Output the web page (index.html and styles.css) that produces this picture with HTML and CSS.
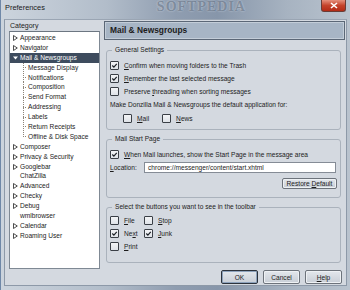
FILE: index.html
```html
<!DOCTYPE html>
<html lang="en">
<head>
    <meta charset="UTF-8">
    <title>Preferences</title>
    <link rel="stylesheet" href="styles.css">
</head>
<body>
    <div class="window">
        <div class="titlebar">
            <span class="title">Preferences</span>
            <span class="watermark">SOFTPEDIA</span>
            <span class="close">
                <svg width="8" height="7" viewBox="0 0 8 7"><path d="M1 1 L7 6 M7 1 L1 6" stroke="#fff" stroke-width="1.6"/></svg>
            </span>
        </div>

        <div class="client">
            <div class="main">
                <!-- category tree -->
                <div class="sidebar">
                    <div class="cat-label">Category</div>
                    <ul class="tree">
                        <li class="row"><svg class="twisty" viewBox="0 0 5 6"><path d="M0.5 0.5 L4.3 3 L0.5 5.5 Z"/></svg>Appearance</li>
                        <li class="row"><svg class="twisty" viewBox="0 0 5 6"><path d="M0.5 0.5 L4.3 3 L0.5 5.5 Z"/></svg>Navigator</li>
                        <li class="row selected"><svg class="twisty open" viewBox="0 0 5 6"><path d="M0 1.5 L5 1.5 L2.5 4.5 Z"/></svg>Mail &amp; Newsgroups</li>
                        <li>
                            <ul class="sub">
                                <li class="row">Message Display</li>
                                <li class="row">Notifications</li>
                                <li class="row">Composition</li>
                                <li class="row">Send Format</li>
                                <li class="row">Addressing</li>
                                <li class="row">Labels</li>
                                <li class="row">Return Receipts</li>
                                <li class="row">Offline &amp; Disk Space</li>
                            </ul>
                        </li>
                        <li class="row"><svg class="twisty" viewBox="0 0 5 6"><path d="M0.5 0.5 L4.3 3 L0.5 5.5 Z"/></svg>Composer</li>
                        <li class="row"><svg class="twisty" viewBox="0 0 5 6"><path d="M0.5 0.5 L4.3 3 L0.5 5.5 Z"/></svg>Privacy &amp; Security</li>
                        <li class="row"><svg class="twisty" viewBox="0 0 5 6"><path d="M0.5 0.5 L4.3 3 L0.5 5.5 Z"/></svg>Googlebar</li>
                        <li class="row leaf">ChatZilla</li>
                        <li class="row"><svg class="twisty" viewBox="0 0 5 6"><path d="M0.5 0.5 L4.3 3 L0.5 5.5 Z"/></svg>Advanced</li>
                        <li class="row"><svg class="twisty" viewBox="0 0 5 6"><path d="M0.5 0.5 L4.3 3 L0.5 5.5 Z"/></svg>Checky</li>
                        <li class="row"><svg class="twisty" viewBox="0 0 5 6"><path d="M0.5 0.5 L4.3 3 L0.5 5.5 Z"/></svg>Debug</li>
                        <li class="row leaf">wmlbrowser</li>
                        <li class="row"><svg class="twisty" viewBox="0 0 5 6"><path d="M0.5 0.5 L4.3 3 L0.5 5.5 Z"/></svg>Calendar</li>
                        <li class="row"><svg class="twisty" viewBox="0 0 5 6"><path d="M0.5 0.5 L4.3 3 L0.5 5.5 Z"/></svg>Roaming User</li>
                    </ul>
                </div>

                <!-- settings panel -->
                <div class="panel">
                    <div class="panel-head">Mail &amp; Newsgroups</div>

                    <fieldset class="group general">
                        <legend>General Settings</legend>
                        <div class="check-row"><span class="cb on"><svg viewBox="0 0 8 8"><path d="M1.5 4 L3.3 5.8 L6.6 2.2"/></svg></span><span><u>C</u>onfirm when moving folders to the Trash</span></div>
                        <div class="check-row"><span class="cb on"><svg viewBox="0 0 8 8"><path d="M1.5 4 L3.3 5.8 L6.6 2.2"/></svg></span><span><u>R</u>emember the last selected message</span></div>
                        <div class="check-row"><span class="cb"></span><span>Preserve <u>t</u>hreading when sorting messages</span></div>
                        <div class="text-row">Make Donzilla Mail &amp; Newsgroups the default application for:</div>
                        <div class="check-row indent">
                            <span class="cb"></span><span class="opt"><u>M</u>ail</span>
                            <span class="cb"></span><span><u>N</u>ews</span>
                        </div>
                    </fieldset>

                    <fieldset class="group start">
                        <legend>Mail Start Page</legend>
                        <div class="check-row"><span class="cb on"><svg viewBox="0 0 8 8"><path d="M1.5 4 L3.3 5.8 L6.6 2.2"/></svg></span><span><u>W</u>hen Mail launches, show the Start Page in the message area</span></div>
                        <div class="location">
                            <span class="loc-label"><u>L</u>ocation:</span>
                            <span class="field">chrome://messenger/content/start.xhtml</span>
                        </div>
                        <div class="restore-row">
                            <span class="btn small"><span>Restore <u>D</u>efault</span></span>
                        </div>
                    </fieldset>

                    <fieldset class="group toolbar">
                        <legend>Select the buttons you want to see in the toolbar</legend>
                        <div class="tb-grid">
                            <div class="check-row"><span class="cb"></span><span><u>F</u>ile</span></div>
                            <div class="check-row"><span class="cb"></span><span><u>S</u>top</span></div>
                            <div class="check-row"><span class="cb on"><svg viewBox="0 0 8 8"><path d="M1.5 4 L3.3 5.8 L6.6 2.2"/></svg></span><span>Ne<u>x</u>t</span></div>
                            <div class="check-row"><span class="cb on"><svg viewBox="0 0 8 8"><path d="M1.5 4 L3.3 5.8 L6.6 2.2"/></svg></span><span><u>J</u>unk</span></div>
                            <div class="check-row"><span class="cb"></span><span><u>P</u>rint</span></div>
                        </div>
                    </fieldset>
                </div>
            </div>

            <div class="footer">
                <span class="btn default">OK</span>
                <span class="btn">Cancel</span>
                <span class="btn"><span><u>H</u>elp</span></span>
            </div>
        </div>
    </div>
</body>
</html>
```

FILE: styles.css
```css
body {
    margin: 0;
    width: 350px;
    height: 290px;
    overflow: hidden;
    font-family: "Liberation Sans", Arial, sans-serif;
    font-size: 6.6px;
    color: #1c1c1c;
    background: #b4bfcc;
}

u {
    text-decoration: underline;
}

.window {
    height: 290px;
    display: flex;
    flex-direction: column;
    border-left: 1px solid #6f88a8;
    background: linear-gradient(to right, #ccd4dd 0%, #b2bdca 30%, #8f9db0 50%, #8796aa 62%, #a7b3c1 82%, #b9c3ce 100%);
}

/* title bar */
.titlebar {
    height: 19px;
    display: flex;
    align-items: flex-start;
}

.title {
    margin: 3px 0 0 4px;
    font-size: 7.4px;
    color: #1a1a1a;
}

.watermark {
    margin: 0 0 0 112px;
    font-family: "Liberation Serif", serif;
    font-weight: bold;
    font-size: 14px;
    line-height: 14px;
    letter-spacing: 1px;
    color: rgba(70, 84, 104, 0.5);
    text-shadow: 0 0 2px rgba(230, 236, 244, 0.7);
}

.close {
    margin-left: auto;
    margin-right: 4px;
    width: 23px;
    height: 11px;
    display: flex;
    align-items: center;
    justify-content: center;
    border: 1px solid #6a3c36;
    border-top: none;
    border-radius: 0 0 3px 3px;
    background: linear-gradient(#e5907c, #c4432b 50%, #b32b16);
}

/* client area */
.client {
    flex: 1;
    margin: 0 3px 4px 3px;
    padding: 1px 1px 0 0;
    background: #d4d9e0;
    border: 1px solid #8d99a8;
    border-top-color: #9aa5b3;
    display: flex;
    flex-direction: column;
}

.main {
    display: flex;
    gap: 4px;
}

.sidebar {
    width: 91px;
    padding-left: 4px;
}

.cat-label {
    height: 10px;
    line-height: 10px;
    padding-left: 1px;
    font-size: 7px;
}

.tree {
    list-style: none;
    margin: 0;
    padding: 1px 0 0;
    height: 235px;
    background: #fff;
    border: 1px solid #7f8994;
    border-top-color: #6c7681;
}

.tree .row {
    height: 9.9px;
    line-height: 9.9px;
    display: flex;
    align-items: center;
    padding-left: 3px;
    white-space: nowrap;
}

.tree .row.leaf {
    padding-left: 10px;
}

.tree .selected {
    background: #3e4c5e;
    color: #fff;
}

.twisty {
    width: 5px;
    height: 6px;
    margin-right: 2px;
    flex: none;
    fill: #fff;
    stroke: #3a3a3a;
    stroke-width: 0.9;
}

.twisty.open {
    fill: #fff;
    stroke: none;
}

.sub {
    list-style: none;
    margin: 0 0 0 13px;
    padding: 0;
}

.sub .row {
    padding-left: 5px;
    background:
        repeating-linear-gradient(to bottom, #8c8478 0 1px, transparent 1px 2px) 0 0 / 1px 100% no-repeat,
        repeating-linear-gradient(to right, #8c8478 0 1px, transparent 1px 2px) 0 50% / 4px 1px no-repeat;
}

.sub .row:last-child {
    background:
        repeating-linear-gradient(to bottom, #8c8478 0 1px, transparent 1px 2px) 0 0 / 1px 50% no-repeat,
        repeating-linear-gradient(to right, #8c8478 0 1px, transparent 1px 2px) 0 50% / 4px 1px no-repeat;
}

/* panel */
.panel {
    flex: 1;
}

.panel-head {
    height: 17px;
    line-height: 17px;
    padding-left: 5px;
    font-size: 8.4px;
    font-weight: bold;
    background: #a7b5c5;
    border: 1px solid #5b6776;
    box-shadow: inset 0 0 0 1px #c3cdd8;
}

.group {
    margin: 6px 4px 0 2px;
    padding: 5px 3px 4px 3px;
    border: 1px solid #aab2bc;
    border-radius: 3px;
}

.group + .group {
    margin-top: 5px;
}

.group legend {
    padding: 0 3px;
    margin-left: 2px;
    height: 8px;
    line-height: 8px;
}

.check-row {
    height: 13px;
    display: flex;
    align-items: center;
    white-space: nowrap;
}

.text-row {
    height: 13px;
    line-height: 13px;
}

.check-row.indent {
    height: 14px;
    padding-left: 13px;
}

.opt {
    margin-right: 13px;
}

.cb {
    width: 7px;
    height: 7px;
    margin-right: 5px;
    flex: none;
    border: 1px solid #3a3f46;
    border-radius: 1px;
    background: linear-gradient(#f3f4f6, #dfe3e8);
    display: flex;
}

.cb svg {
    width: 7px;
    height: 7px;
    fill: none;
    stroke: #1d2127;
    stroke-width: 1.4;
}

.location {
    height: 13px;
    display: flex;
    align-items: center;
}

.loc-label {
    width: 34px;
}

.field {
    flex: 1;
    height: 9px;
    line-height: 9px;
    padding-left: 3px;
    margin-right: 1px;
    background: #fff;
    border: 1px solid #858c96;
}

.restore-row {
    display: flex;
    justify-content: flex-end;
    margin-top: 4px;
    padding-bottom: 4px;
}

.toolbar {
    padding-top: 3px;
    padding-bottom: 9px;
}

.tb-grid {
    display: grid;
    grid-template-columns: 34px auto;
}

/* buttons */
.btn {
    height: 12px;
    width: 35px;
    display: flex;
    align-items: center;
    justify-content: center;
    border: 1px solid #6d737b;
    border-radius: 2px;
    background: linear-gradient(#e3e7ec, #c8ced6);
    box-shadow: inset 0 0 0 1px #eef1f4;
}

.btn.small {
    width: 53px;
    height: 9px;
}

.btn.default {
    border: 1px solid #2c333c;
    box-shadow: inset 0 0 0 1px #8ea3bd;
}

.footer {
    display: flex;
    justify-content: flex-end;
    gap: 5px;
    padding: 1px 3px 0 0;
}
```
